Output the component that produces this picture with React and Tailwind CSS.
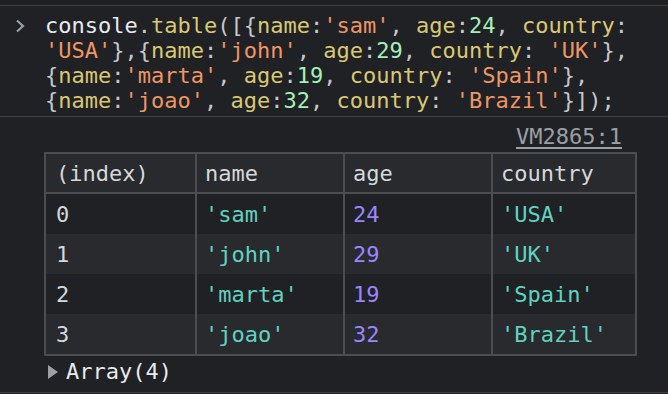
import React from "react";

const C = {
    txt: "text-[#e8eaed]",
    pun: "text-[#c3c8cd]",
    key: "text-[#d9c873]",
    str: "text-[#ee9664]",
    num: "text-[#a3f0b9]",
};

// one line of the typed expression, as [text, colour] pairs
const codeLines = [
    [["console", C.txt], [".", C.pun], ["table", C.key], ["([{", C.pun], ["name", C.key], [":", C.pun], ["'sam'", C.str], [", ", C.pun], ["age", C.key], [":", C.pun], ["24", C.num], [", ", C.pun], ["country", C.key], [":", C.pun]],
    [["'USA'", C.str], ["},{", C.pun], ["name", C.key], [":", C.pun], ["'john'", C.str], [", ", C.pun], ["age", C.key], [":", C.pun], ["29", C.num], [", ", C.pun], ["country", C.key], [": ", C.pun], ["'UK'", C.str], ["},", C.pun]],
    [["{", C.pun], ["name", C.key], [":", C.pun], ["'marta'", C.str], [", ", C.pun], ["age", C.key], [":", C.pun], ["19", C.num], [", ", C.pun], ["country", C.key], [": ", C.pun], ["'Spain'", C.str], ["},", C.pun]],
    [["{", C.pun], ["name", C.key], [":", C.pun], ["'joao'", C.str], [", ", C.pun], ["age", C.key], [":", C.pun], ["32", C.num], [", ", C.pun], ["country", C.key], [": ", C.pun], ["'Brazil'", C.str], ["}]);", C.pun]],
];

const rows = [
    { index: 0, name: "sam", age: 24, country: "USA" },
    { index: 1, name: "john", age: 29, country: "UK" },
    { index: 2, name: "marta", age: 19, country: "Spain" },
    { index: 3, name: "joao", age: 32, country: "Brazil" },
];

function Cell({ width, first, children, className }) {
    return (
        <div className={`${width} ${first ? "" : "border-l-2 border-[#4b4d51]"} pl-2 flex items-center ${className || ""}`}>
            {children}
        </div>
    );
}

function ConsoleTable() {
    return (
        <div className="ml-[44px] mt-[3px] w-[593px] border-2 border-[#4b4d51]">
            <div className="flex h-[40px] bg-[#292a2d] text-[#d5d8dc] border-b-2 border-[#4b4d51]">
                <Cell width="w-[149px] pl-[10px]" first>(index)</Cell>
                <Cell width="w-[148px]">name</Cell>
                <Cell width="w-[148px]">age</Cell>
                <Cell width="flex-1">country</Cell>
            </div>
            {rows.map((r, i) => (
                <div key={r.index} className={`flex h-[40px] ${i % 2 === 1 ? "bg-[#292a2d]" : "bg-[#202124]"}`}>
                    <Cell width="w-[149px] pl-[10px]" first className="text-[#d5d8dc]">{r.index}</Cell>
                    <Cell width="w-[148px]" className="text-[#5fd3c0]">'{r.name}'</Cell>
                    <Cell width="w-[148px]" className="text-[#9b85ff]">{r.age}</Cell>
                    <Cell width="flex-1" className="text-[#5fd3c0]">'{r.country}'</Cell>
                </div>
            ))}
        </div>
    );
}

export default function App() {
    return (
        <div
            className="w-[668px] h-[394px] bg-[#202124] overflow-hidden text-[22px] leading-[25px] whitespace-pre"
            style={{ fontFamily: "'DejaVu Sans Mono', 'Liberation Mono', monospace" }}
        >
            <div className="h-[5px] bg-[#1f1f21]" />
            {/* typed expression */}
            <div className="border-t border-[#3d3e42] pt-[7px] pb-[3px] flex">
                <div className="w-[45px] flex justify-center pt-[5px]">
                    <svg width="14" height="16" viewBox="0 0 14 16" className="mr-[6px]">
                        <path d="M4 2.5 L10 8 L4 13.5" fill="none" stroke="#9aa0a6" strokeWidth="2.2" />
                    </svg>
                </div>
                <div>
                    {codeLines.map((line, i) => (
                        <div key={i}>
                            {line.map(([t, c], j) => (
                                <span key={j} className={c}>{t}</span>
                            ))}
                        </div>
                    ))}
                </div>
            </div>
            {/* result */}
            <div className="border-t border-b border-[#3d3e42] pt-[7px] pb-[8px]">
                <div className="flex justify-end pr-[46px]">
                    <span className="text-[#9aa0a6] underline underline-offset-[3px]">VM2865:1</span>
                </div>
                <ConsoleTable />
                <div className="flex items-center mt-[3px] ml-[48px] text-[#e8eaed]">
                    <svg width="11" height="14" viewBox="0 0 11 14" className="mr-[7px]">
                        <path d="M0 0 L10 7 L0 14 Z" fill="#9aa0a6" />
                    </svg>
                    Array(4)
                </div>
            </div>
        </div>
    );
}
